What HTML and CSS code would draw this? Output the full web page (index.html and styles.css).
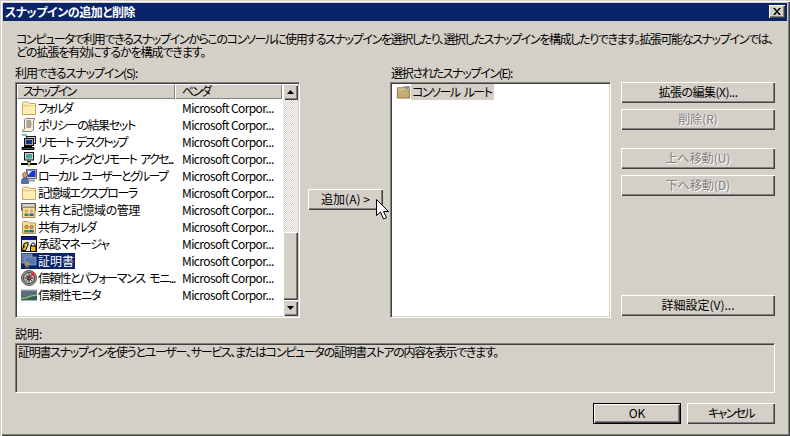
FILE: index.html
```html
<!DOCTYPE html>
<html lang="ja">
<head>
<meta charset="utf-8">
<title>スナップインの追加と削除</title>
<link rel="stylesheet" href="styles.css">
</head>
<body>
<svg class="defs" width="0" height="0" aria-hidden="true">
  <symbol id="i-folder" viewBox="0 0 16 16">
    <path d="M1.5 14.5V3L2.5 2H7L8.5 3.5H14.5V14.5Z" fill="#fbe3a0" stroke="#c9a85c"/>
    <path d="M2 6H8L9 5H14" fill="none" stroke="#c9a85c" stroke-width=".6"/>
    <path d="M2 6.5H14V14H2Z" fill="#fdeeb8"/>
    <path d="M2 3.5H7L8 4.5H14" fill="none" stroke="#fff6d8"/>
  </symbol>
  <symbol id="i-policy" viewBox="0 0 16 16">
    <path d="M4.5 1.5H13.5V3L12.5 4V13L10.5 14.5H1.5V13L3.5 12V2.5Z" fill="#f5eed8" stroke="#8a8468"/>
    <path d="M5.5 4H10M5.5 6H10.5M5.5 8H10.5M5.5 10H10" stroke="#5a5a5a"/>
  </symbol>
  <symbol id="i-remote" viewBox="0 0 16 16">
    <path d="M1 1H6" stroke="#1a9a9a" stroke-width="1.2"/>
    <rect x="5.5" y="2.5" width="9" height="7" fill="#c8c8c8" stroke="#222"/>
    <rect x="3.5" y="4.5" width="9" height="7" fill="#9aa4b8" stroke="#111"/>
    <rect x="5" y="6" width="6" height="4" fill="#1c2e8c"/>
    <path d="M1 13.5H13V15.5H1Z" fill="#555" stroke="#000"/>
    <path d="M3 12.5H11" stroke="#000"/>
  </symbol>
  <symbol id="i-route" viewBox="0 0 16 16">
    <rect x="3.5" y="1.5" width="9" height="7.5" fill="#d4d0c8" stroke="#111"/>
    <rect x="5" y="3" width="6" height="4.5" fill="#48a8a8"/>
    <path d="M6 10.5H10" stroke="#111" stroke-width="1.5"/>
    <path d="M0 13H16" stroke="#000" stroke-width="2"/>
    <path d="M7 11H9V15H7Z" fill="#e8d830" stroke="#665" stroke-width=".5"/>
  </symbol>
  <symbol id="i-users" viewBox="0 0 16 16">
    <rect x="5.5" y="1.5" width="10" height="9" fill="#d8d8e0" stroke="#666"/>
    <rect x="6.5" y="2.5" width="8" height="6.5" fill="#1438c8"/>
    <path d="M7 3H11L7 7Z" fill="#e8f0ff"/>
    <path d="M8 12.5H14" stroke="#999" stroke-width="2"/>
    <circle cx="4" cy="7" r="2.5" fill="#d8a070" stroke="#6c4020" stroke-width=".6"/>
    <path d="M0.5 15.5V12.5L2 10H6L7.5 12.5V15.5Z" fill="#5870b0" stroke="#2c3860" stroke-width=".6"/>
  </symbol>
  <symbol id="i-storage" viewBox="0 0 16 16">
    <path d="M0.5 1.5H14.5V8.5H0.5Z" fill="#b8b8b8" stroke="#555"/>
    <path d="M2 3H13" stroke="#eee"/>
    <path d="M1.5 5.5H14V15.5H1.5Z" fill="#f4dc98" stroke="#a88c4c"/>
    <circle cx="5.5" cy="9" r="1.6" fill="#d8a070"/>
    <path d="M3.5 14V11.5H7.5V14Z" fill="#2c9040"/>
    <circle cx="10.5" cy="9" r="1.6" fill="#d8a070"/>
    <path d="M8.5 14V11.5H12.5V14Z" fill="#2858b0"/>
  </symbol>
  <symbol id="i-share" viewBox="0 0 16 16">
    <path d="M1.5 14.5V3.5L2.5 2.5H7L8.5 4H14.5V14.5Z" fill="#f8dc90" stroke="#b89850"/>
    <circle cx="5.5" cy="8" r="1.7" fill="#d8a070" stroke="#5c3818" stroke-width=".5"/>
    <path d="M3.2 13.5V11H7.8V13.5Z" fill="#2c9040"/>
    <circle cx="10.5" cy="8" r="1.7" fill="#d8a070" stroke="#5c3818" stroke-width=".5"/>
    <path d="M8.2 13.5V11H12.8V13.5Z" fill="#2858b0"/>
  </symbol>
  <symbol id="i-auth" viewBox="0 0 16 16">
    <rect x="0.5" y="0.5" width="15" height="15" fill="#e8e8e8" stroke="#111"/>
    <rect x="1" y="1" width="14" height="3" fill="#0c1c90"/>
    <path d="M3 7.5L7 6.5V9L4.5 14.5H1.5Z" fill="#f0d020" stroke="#000"/>
    <rect x="9.5" y="10" width="5.5" height="5.5" fill="#e8c020" stroke="#000"/>
    <path d="M10.5 10V8.5C10.5 6.5 14 6.5 14 8.5V10" fill="none" stroke="#000"/>
    <path d="M3 9V12" stroke="#000"/>
  </symbol>
  <symbol id="i-cert" viewBox="0 0 16 16">
    <rect width="16" height="16" fill="#0a246a"/>
    <rect x="1" y="1" width="10" height="9" fill="#6078a8" stroke="#9cb0d0" stroke-width=".6"/>
    <rect x="4" y="4" width="11" height="8" fill="#5a76ae" stroke="#a0b4d8" stroke-width=".6"/>
    <circle cx="6" cy="11" r="2.4" fill="#a89468"/>
    <path d="M4.5 12.5L4 15.5L6 14.5L8 15.5L7.5 12.5Z" fill="#706848"/>
  </symbol>
  <symbol id="i-perf" viewBox="0 0 16 16">
    <circle cx="8" cy="8" r="7.5" fill="#9a9a9a" stroke="#555"/>
    <circle cx="8" cy="8" r="5.5" fill="#c4c4c4" stroke="#444"/>
    <path d="M8 3.5V5M3.5 8H5M11 8H12.5M8 11V12.5M4.8 4.8L5.8 5.8M4.8 11.2L5.8 10.2M11.2 11.2L10.2 10.2" stroke="#333"/>
    <circle cx="8" cy="8" r="2.2" fill="#666" stroke="#222"/>
    <path d="M8 8L11.5 4.5" stroke="#d02020" stroke-width="1.2"/>
    <circle cx="12" cy="4" r="1.7" fill="#e82020"/>
  </symbol>
  <symbol id="i-monitor" viewBox="0 0 16 16">
    <rect x="0" y="2" width="16" height="12" fill="#5c6c7c"/>
    <rect x="0" y="2" width="16" height="1.5" fill="#c8d0d8"/>
    <path d="M0 12L5 11.5L10 9.5L16 8.5V14H0Z" fill="#3c5c58"/>
    <path d="M0 11.5L5 11L10 9L16 8" fill="none" stroke="#88e060" stroke-width="1.2"/>
    <rect x="0" y="13" width="16" height="1" fill="#a8b4bc"/>
  </symbol>
  <symbol id="i-root" viewBox="0 0 16 16">
    <path d="M1.5 14.5V3.5H7L8 2.5H14.5V14.5Z" fill="#c8ac78" stroke="#8a7448"/>
    <path d="M2 5H8.5L9.5 4H14" fill="none" stroke="#e4d0a4"/>
    <rect x="10" y="3" width="3" height="1.5" fill="#3c8ce0"/>
  </symbol>
</svg>

<div class="window">
  <header class="titlebar">
    <span class="title">スナップインの追加と削除</span>
    <button class="close" type="button" aria-label="閉じる">
      <svg width="8" height="7" viewBox="0 0 8 7"><path d="M0 0H2L4 2.5L6 0H8L5 3.5L8 7H6L4 4.5L2 7H0L3 3.5Z" fill="#000"/></svg>
    </button>
  </header>
  <main class="content">
    <div class="intro">
      <p class="intro-line ls-14">コンピュータで利用できるスナップインからこのコンソールに使用するスナップインを選択したり、選択したスナップインを構成したりできます。拡張可能なスナップインでは、</p>
      <p class="intro-line ls-11">どの拡張を有効にするかを構成できます。</p>
    </div>

    <div class="columns">
      <label class="label label-left ls-11">利用できるスナップイン(S):</label>
      <label class="label label-right ls-13">選択されたスナップイン(E):</label>

      <div class="sunken available">
        <div class="table">
          <div class="thead">
            <div class="th th-name ls-20">スナップイン</div>
            <div class="th th-vendor ls-20">ベンダ</div>
          </div>
          <div class="row"><svg class="icon"><use href="#i-folder"/></svg><div class="name"><span class="ls-20">フォルダ</span></div><div class="vendor">Microsoft Corpor...</div></div>
          <div class="row"><svg class="icon"><use href="#i-policy"/></svg><div class="name"><span class="ls-13">ポリシーの結果セット</span></div><div class="vendor">Microsoft Corpor...</div></div>
          <div class="row"><svg class="icon"><use href="#i-remote"/></svg><div class="name"><span class="ls-20">リモート デスクトップ</span></div><div class="vendor">Microsoft Corpor...</div></div>
          <div class="row"><svg class="icon"><use href="#i-route"/></svg><div class="name"><span class="ls-17">ルーティングとリモート アクセ...</span></div><div class="vendor">Microsoft Corpor...</div></div>
          <div class="row"><svg class="icon"><use href="#i-users"/></svg><div class="name"><span class="ls-17">ローカル ユーザーとグループ</span></div><div class="vendor">Microsoft Corpor...</div></div>
          <div class="row"><svg class="icon"><use href="#i-folder"/></svg><div class="name"><span class="ls-15">記憶域エクスプローラ</span></div><div class="vendor">Microsoft Corpor...</div></div>
          <div class="row"><svg class="icon"><use href="#i-storage"/></svg><div class="name"><span class="ls-5">共有と記憶域の管理</span></div><div class="vendor">Microsoft Corpor...</div></div>
          <div class="row"><svg class="icon"><use href="#i-share"/></svg><div class="name"><span class="ls-13">共有フォルダ</span></div><div class="vendor">Microsoft Corpor...</div></div>
          <div class="row"><svg class="icon"><use href="#i-auth"/></svg><div class="name"><span class="ls-11">承認マネージャ</span></div><div class="vendor">Microsoft Corpor...</div></div>
          <div class="row selected"><svg class="icon"><use href="#i-cert"/></svg><div class="name"><span>証明書</span></div><div class="vendor">Microsoft Corpor...</div></div>
          <div class="row"><svg class="icon"><use href="#i-perf"/></svg><div class="name"><span class="ls-13">信頼性とパフォーマンス モニ...</span></div><div class="vendor">Microsoft Corpor...</div></div>
          <div class="row"><svg class="icon"><use href="#i-monitor"/></svg><div class="name"><span class="ls-11">信頼性モニタ</span></div><div class="vendor">Microsoft Corpor...</div></div>
        </div>
        <div class="scrollbar">
          <div class="arrow"><svg width="7" height="4" viewBox="0 0 7 4"><path d="M3.5 0L7 4H0Z" fill="#000"/></svg></div>
          <div class="track"></div>
          <div class="thumb"></div>
          <div class="arrow"><svg width="7" height="4" viewBox="0 0 7 4"><path d="M0 0H7L3.5 4Z" fill="#000"/></svg></div>
        </div>
      </div>

      <div class="add-slot">
        <button class="btn add" type="button">追加(A) &gt;</button>
      </div>

      <div class="sunken selected-list">
        <div class="root-item"><svg class="icon"><use href="#i-root"/></svg><span class="ls-15">コンソール ルート</span></div>
      </div>

      <div class="actions">
        <button class="btn ls-5" type="button">拡張の編集(X)...</button>
        <button class="btn disabled" type="button" disabled>削除(R)</button>
        <button class="btn disabled move-up" type="button" disabled>上へ移動(U)</button>
        <button class="btn disabled" type="button" disabled>下へ移動(D)</button>
        <button class="btn advanced" type="button">詳細設定(V)...</button>
      </div>
    </div>

    <label class="label desc-label">説明:</label>
    <div class="desc ls-13">証明書スナップインを使うとユーザー、サービス、またはコンピュータの証明書ストアの内容を表示できます。</div>

    <div class="footer">
      <button class="btn default" type="button">OK</button>
      <button class="btn ls-17" type="button">キャンセル</button>
    </div>
  </main>
</div>

<svg class="cursor" width="13" height="21" viewBox="0 0 13 21"><path d="M.5.5V16.5L4.5 13L7.5 20L10.5 18.7L7.5 12.5H12.5Z" fill="#fff" stroke="#000"/></svg>
</body>
</html>
```
FILE: styles.css
```css
* { box-sizing: border-box; }

html, body {
  margin: 0;
  padding: 0;
  width: 790px;
  height: 436px;
  overflow: hidden;
}

body {
  position: relative;
  background: #d4d0c8;
  color: #000;
  font-family: "Noto Sans CJK JP", "Noto Sans", sans-serif;
  font-size: 12px;
  font-feature-settings: "palt";
  line-height: 13px;
}

/* Tracking steps: the reference's bitmap font sets kana narrower than Noto does. */
.ls-5 { letter-spacing: -0.5px; }
.ls-11 { letter-spacing: -1.1px; }
.ls-13 { letter-spacing: -1.3px; }
.ls-14 { letter-spacing: -1.37px; }
.ls-15 { letter-spacing: -1.5px; }
.ls-17 { letter-spacing: -1.7px; }
.ls-20 { letter-spacing: -2px; }

.defs { position: absolute; }

.window {
  width: 790px;
  height: 436px;
  padding: 3px;
  display: flex;
  flex-direction: column;
  background: #d4d0c8;
  box-shadow: inset 1px 1px #d4d0c8, inset 2px 2px #fff, inset -1px -1px #404040, inset -2px -2px #808080;
}

.titlebar {
  flex: none;
  height: 18px;
  padding: 0 2px;
  display: flex;
  align-items: flex-start;
  justify-content: space-between;
  background: #0a246a;
  color: #fff;
  font-weight: 700;
}

.title { letter-spacing: -0.43px; margin-top: 2px; }

.close {
  width: 16px;
  height: 13px;
  margin-top: 2px;
  padding: 0;
  border: 0;
  display: flex;
  align-items: center;
  justify-content: center;
  background: #d4d0c8;
  box-shadow: inset 1px 1px #fff, inset -1px -1px #404040, inset -2px -2px #808080;
}

.content {
  flex: 1;
  padding: 11px 12px 0;
  display: flex;
  flex-direction: column;
}

.intro { height: 26px; padding-left: 1px; }
.intro-line { margin: 0; white-space: nowrap; }

.label { display: block; height: 13px; }

.columns {
  margin-top: 8px;
  display: grid;
  grid-template-columns: 285px 90px 221px 164px;
  grid-template-rows: 13px 236px;
  row-gap: 3px;
}

.label-left { grid-column: 1; grid-row: 1; }
.label-right { grid-column: 3; grid-row: 1; padding-left: 1px; }

.sunken {
  padding: 2px;
  background: #fff;
  border: 1px solid;
  border-color: #808080 #fff #fff #808080;
  box-shadow: inset 1px 1px #404040, inset -1px -1px #d4d0c8;
}

.available {
  grid-column: 1;
  grid-row: 2;
  padding: 1px;
  display: flex;
}

.table { flex: none; width: 266px; }

.thead { display: flex; height: 15px; }

.th {
  height: 15px;
  padding-left: 6px;
  line-height: 14px;
  background: #d4d0c8;
  box-shadow: inset 1px 1px #fff, inset -1px -1px #808080;
}

.th-name { width: 158px; }
.th-vendor { width: 107px; padding-left: 7px; }

.row { display: flex; align-items: center; height: 17px; }

.icon { flex: none; width: 16px; height: 16px; margin-left: 4px; }

.name { flex: none; width: 138px; white-space: nowrap; }
.name span { display: inline-block; padding: 1px 1px 2px; line-height: 13px; word-spacing: 3px; }

.vendor { white-space: nowrap; padding-left: 7px; letter-spacing: -0.6px; }

.selected .name span { background: #0a246a; color: #fff; }

.scrollbar {
  flex: none;
  width: 15px;
  display: flex;
  flex-direction: column;
}

.arrow {
  flex: none;
  height: 16px;
  display: flex;
  align-items: center;
  justify-content: center;
  background: #d4d0c8;
  box-shadow: inset 1px 1px #fff, inset 2px 2px #d4d0c8, inset -1px -1px #404040, inset -2px -2px #808080;
}

.track {
  flex: 1;
  background: conic-gradient(#fff 25%, #d4d0c8 0 50%, #fff 0 75%, #d4d0c8 0) 0 0 / 2px 2px;
}

.thumb {
  flex: none;
  height: 68px;
  background: #d4d0c8;
  box-shadow: inset 1px 1px #fff, inset -1px -1px #404040, inset -2px -2px #808080;
}

.add-slot { grid-column: 2; grid-row: 2; padding: 107px 0 0 8px; }

.btn {
  height: 21px;
  padding: 0 0 2px;
  border: 0;
  font: inherit;
  font-feature-settings: inherit;
  color: #000;
  background: #d4d0c8;
  box-shadow: inset 1px 1px #fff, inset -1px -1px #404040, inset -2px -2px #808080;
}

.add { width: 75px; }

.selected-list {
  grid-column: 3;
  grid-row: 2;
  padding: 1px 0 0 5px;
}

.root-item { display: flex; align-items: center; height: 16px; }
.root-item .icon { margin-left: 0; width: 15px; }
.root-item span { background: #d4d0c8; padding: 1px 2px 2px 1px; line-height: 13px; word-spacing: 3px; }

.actions {
  grid-column: 4;
  grid-row: 2;
  padding-left: 10px;
  display: flex;
  flex-direction: column;
  gap: 6px;
}

.disabled { color: #808080; text-shadow: 1px 1px #fff; }
.move-up { margin-top: 12px; }
.advanced { margin-top: auto; margin-bottom: 2px; }

.desc-label { margin-top: 9px; }

.desc {
  margin-top: 3px;
  height: 50px;
  padding: 1px 2px;
  border: 1px solid;
  border-color: #808080 #fff #fff #808080;
  box-shadow: inset 1px 1px #404040;
}

.footer {
  margin-top: 10px;
  display: flex;
  justify-content: flex-end;
  gap: 6px;
}

.footer .btn { width: 88px; }

.default {
  outline: 1px solid #000;
  outline-offset: -1px;
  box-shadow: inset 2px 2px #fff, inset -2px -2px #404040, inset -3px -3px #808080;
}

.cursor { position: absolute; left: 376px; top: 199px; }
```
